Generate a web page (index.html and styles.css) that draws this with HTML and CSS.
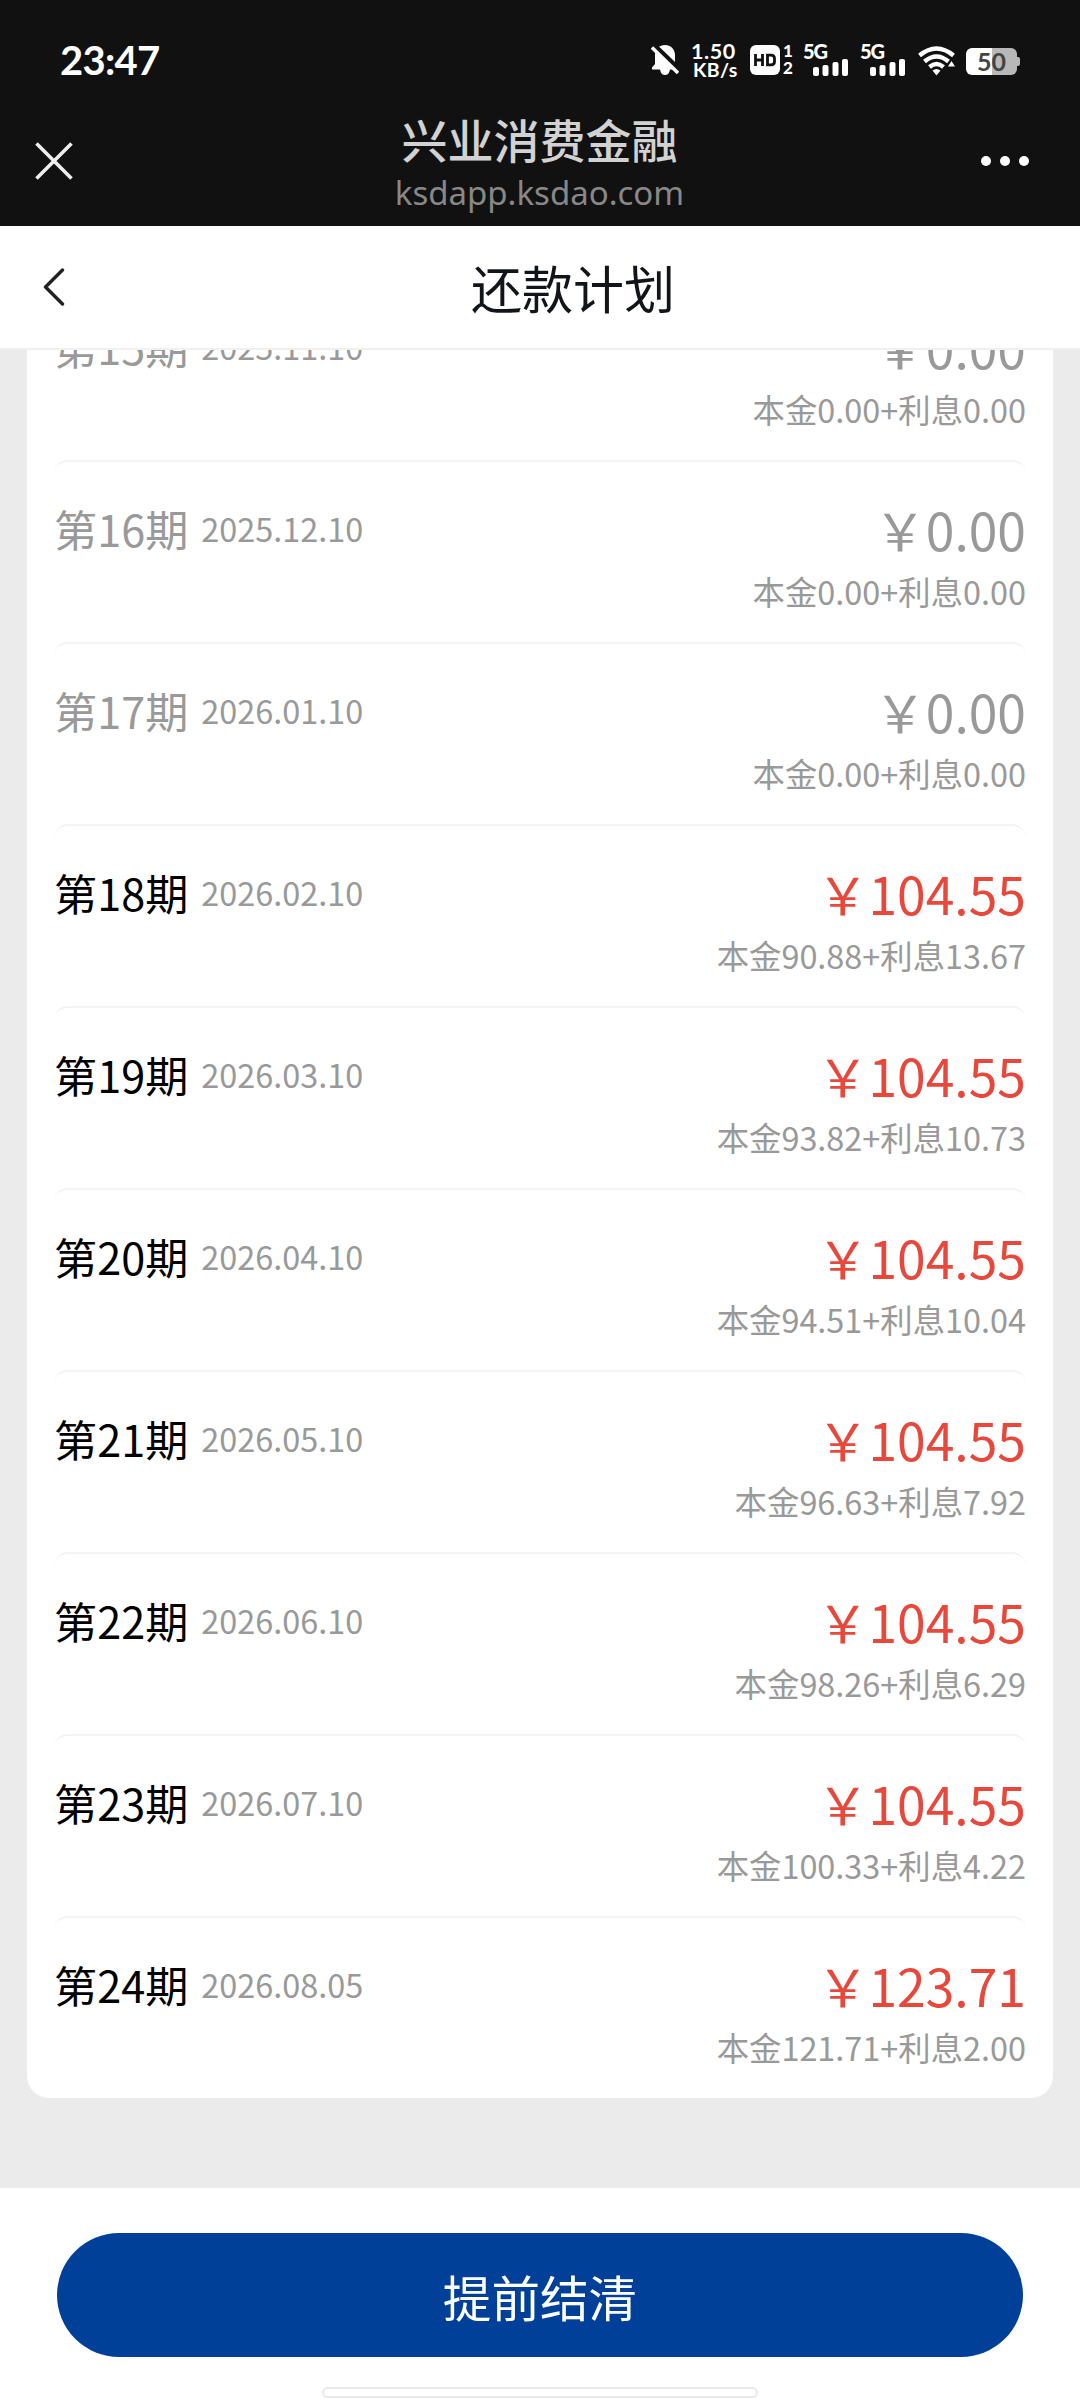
FILE: index.html
```html
<!DOCTYPE html>
<html lang="zh-CN">
<head>
<meta charset="utf-8">
<title>还款计划</title>
<link rel="stylesheet" href="styles.css">
</head>
<body>
<div class="screen">
  <header class="top">
    <div class="status">
      <span class="clock">23:47</span>
      <div class="status-icons">
        <svg class="bell" width="28" height="32" viewBox="0 0 28 32">
          <path d="M14 1C19.500 1 24 5 24 11V21L26 25.500H19Q18 31 14 31Q10 31 9 25.500H1V23.500L4 20V11C4 5 8.500 1 14 1Z" fill="#fff"/>
          <path d="M1 0L28 26" stroke="#111" stroke-width="6"/>
          <path d="M1 3.500L27 29" stroke="#fff" stroke-width="3.400"/>
        </svg>
        <div class="speed"><span class="speed-num">1.50</span><span class="speed-unit">KB/s</span></div>
        <div class="hd"><svg width="30" height="30" viewBox="0 0 30 30">
          <rect width="30" height="30" rx="6" fill="#fff"/>
          <path d="M5.500 9V21M12.500 9V21M5.500 15H12.500M17.500 10.200V19.800H21Q24.500 19.800 24.500 16.500V13.500Q24.500 10.200 21 10.200Z" fill="none" stroke="#111" stroke-width="2.800"/>
        </svg><div class="sims"><span>1</span><span>2</span></div></div>
        <div class="net"><span class="gen">5G</span><svg width="36" height="17" viewBox="0 0 36 17" fill="#fff">
          <rect x="0" y="8" width="6" height="9" rx="2"/><rect x="9.500" y="6" width="6" height="11" rx="2"/><rect x="19.500" y="3" width="6" height="14" rx="2"/><rect x="29" y="0" width="6" height="17" rx="2"/>
        </svg></div>
        <div class="net"><span class="gen">5G</span><svg width="36" height="17" viewBox="0 0 36 17" fill="#fff">
          <rect x="0" y="8" width="6" height="9" rx="2"/><rect x="9.500" y="6" width="6" height="11" rx="2"/><rect x="19.500" y="3" width="6" height="14" rx="2"/><rect x="29" y="0" width="6" height="17" rx="2"/>
        </svg></div>
        <svg class="wifi" width="38" height="30" viewBox="0 0 38 30">
          <g fill="none" stroke="#fff" stroke-width="4.400">
            <path d="M1.500 9.500Q18.500-4.500 35.500 9.500"/>
            <path d="M6.500 15.500Q18.500 5.500 30.500 15.500"/>
            <path d="M11.500 21Q18.500 15 25.500 21"/>
          </g>
          <path d="M14.500 24.500Q18.500 21.500 22.500 24.500L18.500 29.500Z" fill="#fff"/>
          <path d="M33.500 15L37 20.500H30Z" fill="#fff"/>
        </svg>
        <div class="battery"><span>50</span></div>
      </div>
    </div>
    <div class="webbar">
      <svg class="close" width="38" height="38" viewBox="0 0 38 38"><path d="M1.500 1.500L36.500 36.500M36.500 1.500L1.500 36.500" stroke="#eee" stroke-width="3.600"/></svg>
      <div class="site">
        <div class="site-name">兴业消费金融</div>
        <div class="site-host">ksdapp.ksdao.com</div>
      </div>
      <svg class="more" width="50" height="12" viewBox="0 0 50 12" fill="#fff"><circle cx="6" cy="6" r="5"/><circle cx="25" cy="6" r="5"/><circle cx="44" cy="6" r="5"/></svg>
    </div>
  </header>
  <nav class="nav">
    <svg class="back" width="22" height="38" viewBox="0 0 22 38"><path d="M19.500 2L2.500 19L19.500 36" fill="none" stroke="#222" stroke-width="3.400" stroke-linecap="round" stroke-linejoin="round"/></svg>
    <h1 class="nav-title">还款计划</h1>
  </nav>
  <main class="scroll">
    <ul class="card">
      <li class="row paid"><div class="term">第15期</div><div class="date">2025.11.10</div><div class="money"><div class="amount">￥0.00</div><div class="detail">本金0.00+利息0.00</div></div></li>
      <li class="row paid"><div class="term">第16期</div><div class="date">2025.12.10</div><div class="money"><div class="amount">￥0.00</div><div class="detail">本金0.00+利息0.00</div></div></li>
      <li class="row paid"><div class="term">第17期</div><div class="date">2026.01.10</div><div class="money"><div class="amount">￥0.00</div><div class="detail">本金0.00+利息0.00</div></div></li>
      <li class="row"><div class="term">第18期</div><div class="date">2026.02.10</div><div class="money"><div class="amount">￥104.55</div><div class="detail">本金90.88+利息13.67</div></div></li>
      <li class="row"><div class="term">第19期</div><div class="date">2026.03.10</div><div class="money"><div class="amount">￥104.55</div><div class="detail">本金93.82+利息10.73</div></div></li>
      <li class="row"><div class="term">第20期</div><div class="date">2026.04.10</div><div class="money"><div class="amount">￥104.55</div><div class="detail">本金94.51+利息10.04</div></div></li>
      <li class="row"><div class="term">第21期</div><div class="date">2026.05.10</div><div class="money"><div class="amount">￥104.55</div><div class="detail">本金96.63+利息7.92</div></div></li>
      <li class="row"><div class="term">第22期</div><div class="date">2026.06.10</div><div class="money"><div class="amount">￥104.55</div><div class="detail">本金98.26+利息6.29</div></div></li>
      <li class="row"><div class="term">第23期</div><div class="date">2026.07.10</div><div class="money"><div class="amount">￥104.55</div><div class="detail">本金100.33+利息4.22</div></div></li>
      <li class="row"><div class="term">第24期</div><div class="date">2026.08.05</div><div class="money"><div class="amount">￥123.71</div><div class="detail">本金121.71+利息2.00</div></div></li>
    </ul>
  </main>
  <footer class="footer">
    <button class="settle">提前结清</button>
    <div class="home"></div>
  </footer>
</div>
</body>
</html>
```
FILE: styles.css
```css
* { box-sizing: border-box; margin: 0; padding: 0; }
body { font-family: "Noto Sans CJK SC", sans-serif; background: #ebebeb; }
svg { display: block; flex: none; }
.screen { width: 1080px; height: 2400px; overflow: hidden; display: flex; flex-direction: column; }

.top { height: 226px; flex: none; background: #111; color: #fff; }
.status { height: 120px; display: flex; justify-content: space-between; padding: 0 60px; font-family: Lato, sans-serif; font-weight: 700; }
.clock { font-size: 40px; line-height: 120px; letter-spacing: -0.7px; }
.status-icons { display: flex; padding-top: 44px; }
.bell { margin-right: 12px; }
.speed { width: 46px; display: flex; flex-direction: column; margin-right: 13px; margin-top: -3px; }
.speed-num { font-size: 21.5px; line-height: 20px; letter-spacing: 0.6px; }
.speed-unit { font-size: 19.5px; line-height: 18px; letter-spacing: 0.4px; padding-left: 2px; }
.hd { display: flex; width: 54px; padding-top: 1px; gap: 3px; }
.sims { display: flex; flex-direction: column; font-size: 17px; line-height: 17px; font-weight: 900; margin-top: -3px; }
.net { width: 57px; }
.gen { display: block; font-size: 20px; line-height: 15px; height: 15px; margin-left: -1px; font-weight: 900; letter-spacing: -1px; }
.net svg { margin-left: 9px; }
.wifi { margin-top: 2px; margin-right: 10px; }
.battery { width: 51px; height: 27px; margin: 4px 3px 0 0; border-radius: 6px; background: linear-gradient(90deg, #fff 51%, #b8b8b8 51%); position: relative; text-align: center; font-size: 25px; line-height: 27px; color: #444; }
.battery::after { content: ""; position: absolute; right: -3px; top: 9px; width: 3px; height: 9px; background: #b8b8b8; border-radius: 0 2px 2px 0; }

.webbar { height: 106px; display: flex; justify-content: space-between; padding: 0 50px 0 35px; }
.close { margin-top: 22px; }
.site { text-align: center; margin-left: 26px; white-space: nowrap; }
.site-name { font-size: 46px; line-height: 46px; font-weight: 500; color: #d2d2d2; margin-top: -5px; }
.site-host { font-family: "Noto Sans", sans-serif; font-size: 33px; line-height: 46px; color: #888; margin-top: 9px; }
.more { margin-top: 35px; }

.nav { height: 124px; flex: none; background: #fff; border-bottom: 2px solid #f0f0f0; display: flex; align-items: center; padding-left: 43px; }
.nav-title { font-size: 51px; line-height: 76px; font-weight: 400; color: #111418; margin-left: 406px; }

.scroll { height: 1838px; flex: none; overflow: hidden; padding: 0 27px; }
.card { list-style: none; margin-top: -72px; background: #fff; border-radius: 22px; padding: 0 27px; }
.row { height: 182px; border-top: 2px solid #f3f3f3; border-radius: 14px; display: flex; }
.term { font-size: 43.2px; line-height: 60px; margin: 36px 0 0 0; color: #000; }
.date { font-size: 32.4px; line-height: 60px; margin: 36px 0 0 13px; color: #999; }
.money { margin-left: auto; text-align: right; }
.amount { font-size: 51.6px; line-height: 70px; margin-top: 32px; color: #e8483b; }
.detail { font-size: 32.4px; line-height: 50px; margin-top: 2px; color: #999; }
.paid .term, .paid .amount { color: #999; }

.footer { height: 212px; background: #fff; display: flex; flex-direction: column; align-items: center; padding-top: 45px; }
.settle { width: 966px; height: 124px; border: 0; border-radius: 62px; background: #004098; color: #fff; font: 400 48.6px/126px "Noto Sans CJK SC", sans-serif; }
.home { width: 436px; height: 11px; margin-top: 30px; border: 2px solid #e9e9e9; border-radius: 6px; }
```
